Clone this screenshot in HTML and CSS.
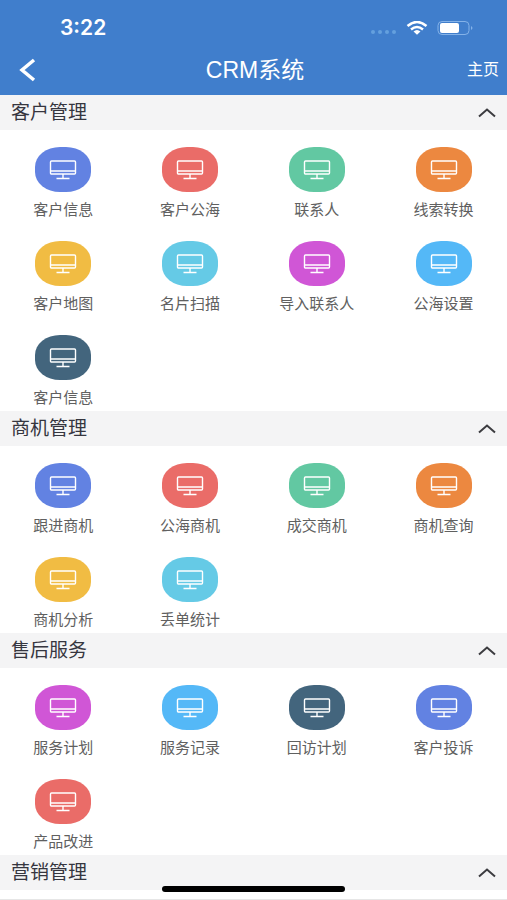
FILE: index.html
```html
<!DOCTYPE html>
<html lang="zh-CN">
<head>
<meta charset="utf-8">
<meta name="viewport" content="width=device-width, initial-scale=1">
<title>CRM系统</title>
<link rel="stylesheet" href="styles.css">
</head>
<body>
<svg class="defs" aria-hidden="true">
  <symbol id="monitor" viewBox="0 0 28 20">
    <rect x="1.500" y="1" width="25" height="13" rx="1"/>
    <path d="M1.500 11h25M14 14v4M7.500 18.500h13"/>
  </symbol>
  <symbol id="chevron" viewBox="0 0 18 10">
    <path d="M1 8.500l8-7 8 7"/>
  </symbol>
</svg>
<header class="top">
  <div class="status">
    <span class="time">3:22</span>
    <div class="signals">
      <span class="dots"><i></i><i></i><i></i><i></i></span>
      <svg class="wifi" viewBox="0 0 22 14" aria-hidden="true">
        <path d="M1.500 5Q11-3 20.500 5M5 8.500Q11 3.500 17 8.500"/>
        <path class="solid" d="M7.500 10.500Q11 7.500 14.500 10.500L11 13.800z"/>
      </svg>
      <svg class="battery" viewBox="0 0 36 14" aria-hidden="true">
        <rect class="shell" x="1" y="0.500" width="31" height="13" rx="4"/>
        <rect class="charge" x="3" y="2" width="19" height="10" rx="2"/>
        <path class="cap" d="M34 5q3 2 0 4z"/>
      </svg>
    </div>
  </div>
  <nav class="bar">
    <button class="back" type="button" aria-label="返回"><svg viewBox="0 0 18 24"><path d="M16 2L4 12l12 10"/></svg></button>
    <h1>CRM系统</h1>
    <a class="home" href="#">主页</a>
  </nav>
</header>
<main>
  <section>
    <h2><button class="head" type="button">客户管理<svg><use href="#chevron"/></svg></button></h2>
    <div class="grid">
      <a class="item" href="#"><span class="tile blue"><svg><use href="#monitor"/></svg></span>客户信息</a>
      <a class="item" href="#"><span class="tile red"><svg><use href="#monitor"/></svg></span>客户公海</a>
      <a class="item" href="#"><span class="tile green"><svg><use href="#monitor"/></svg></span>联系人</a>
      <a class="item" href="#"><span class="tile orange"><svg><use href="#monitor"/></svg></span>线索转换</a>
      <a class="item" href="#"><span class="tile yellow"><svg><use href="#monitor"/></svg></span>客户地图</a>
      <a class="item" href="#"><span class="tile cyan"><svg><use href="#monitor"/></svg></span>名片扫描</a>
      <a class="item" href="#"><span class="tile purple"><svg><use href="#monitor"/></svg></span>导入联系人</a>
      <a class="item" href="#"><span class="tile sky"><svg><use href="#monitor"/></svg></span>公海设置</a>
      <a class="item" href="#"><span class="tile slate"><svg><use href="#monitor"/></svg></span>客户信息</a>
    </div>
  </section>
  <section>
    <h2><button class="head" type="button">商机管理<svg><use href="#chevron"/></svg></button></h2>
    <div class="grid">
      <a class="item" href="#"><span class="tile blue"><svg><use href="#monitor"/></svg></span>跟进商机</a>
      <a class="item" href="#"><span class="tile red"><svg><use href="#monitor"/></svg></span>公海商机</a>
      <a class="item" href="#"><span class="tile green"><svg><use href="#monitor"/></svg></span>成交商机</a>
      <a class="item" href="#"><span class="tile orange"><svg><use href="#monitor"/></svg></span>商机查询</a>
      <a class="item" href="#"><span class="tile yellow"><svg><use href="#monitor"/></svg></span>商机分析</a>
      <a class="item" href="#"><span class="tile cyan"><svg><use href="#monitor"/></svg></span>丢单统计</a>
    </div>
  </section>
  <section>
    <h2><button class="head" type="button">售后服务<svg><use href="#chevron"/></svg></button></h2>
    <div class="grid">
      <a class="item" href="#"><span class="tile purple"><svg><use href="#monitor"/></svg></span>服务计划</a>
      <a class="item" href="#"><span class="tile sky"><svg><use href="#monitor"/></svg></span>服务记录</a>
      <a class="item" href="#"><span class="tile slate"><svg><use href="#monitor"/></svg></span>回访计划</a>
      <a class="item" href="#"><span class="tile blue"><svg><use href="#monitor"/></svg></span>客户投诉</a>
      <a class="item" href="#"><span class="tile red"><svg><use href="#monitor"/></svg></span>产品改进</a>
    </div>
  </section>
  <section class="last">
    <h2><button class="head" type="button">营销管理<svg><use href="#chevron"/></svg></button></h2>
  </section>
</main>
<div class="indicator"></div>
</body>
</html>
```
FILE: styles.css
```css
* { box-sizing: border-box; }
body {
  margin: 0;
  background: #fff;
  font-family: "Liberation Sans", "Noto Sans CJK SC", sans-serif;
}
h1, h2 { margin: 0; font-weight: 400; }
button { border: 0; background: none; padding: 0; font: inherit; }
a { text-decoration: none; }
svg { display: block; fill: none; }
.defs { position: absolute; width: 0; height: 0; }

.top { height: 95px; background: #407ecc; color: #fff; }
.status {
  display: flex;
  justify-content: space-between;
  align-items: center;
  height: 44px;
  padding: 12px 34px 0 60px;
}
.time { font: 600 21px/32px Inter, sans-serif; }
.signals { display: flex; align-items: center; }
.dots { display: flex; gap: 3px; margin: 8px 10px 0 0; }
.dots i { width: 4px; height: 4px; border-radius: 2px; background: #64a0de; }
.wifi { width: 22px; height: 14px; margin-right: 9px; stroke: #fff; stroke-width: 2.5; }
.wifi .solid { fill: #fff; stroke: none; }
.battery { width: 36px; height: 14px; }
.shell { stroke: #84b2e8; }
.charge { fill: #fff; }
.cap { fill: #84b2e8; }
.bar {
  display: grid;
  grid-template-columns: 1fr auto 1fr;
  align-items: center;
  height: 51px;
  padding: 0 8px 0 18px;
}
.back { width: 18px; height: 24px; }
.back svg { width: 18px; height: 24px; stroke: #fff; stroke-width: 3.5; }
.bar h1 { font-size: 23px; line-height: 32px; margin-right: 7px; }
.home { justify-self: end; color: #fff; font-size: 16px; line-height: 24px; }

.head {
  display: flex;
  justify-content: space-between;
  align-items: center;
  width: 100%;
  height: 35px;
  padding: 0 11px;
  background: #f4f4f5;
  color: #36363f;
  font-size: 19px;
  line-height: 28px;
}
.head svg { width: 18px; height: 10px; stroke: #3c3c40; stroke-width: 2; }
.grid {
  display: grid;
  grid-template-columns: repeat(4, 1fr);
  row-gap: 21px;
  padding: 17px 0 3px;
}
.item {
  display: flex;
  flex-direction: column;
  align-items: center;
  gap: 8px;
  color: #606060;
  font-size: 15px;
  line-height: 20px;
}
.tile {
  display: grid;
  place-items: center;
  width: 56px;
  height: 45px;
  border-radius: 25px / 20px;
}
.tile svg { width: 28px; height: 20px; stroke: #fff; stroke-width: 1.4; }
.blue { background: #6282e2; }
.red { background: #ea6c68; }
.green { background: #62c8a2; }
.orange { background: #ec8840; }
.yellow { background: #f1bc43; }
.cyan { background: #65cae6; }
.purple { background: #d056d6; }
.sky { background: #54b8f7; }
.slate { background: #43657d; }
.last { padding-bottom: 9px; border-bottom: 1px solid #e6e6e6; }
.indicator {
  position: fixed;
  bottom: 8px;
  left: 50%;
  width: 36%;
  height: 6px;
  margin-left: -18%;
  border-radius: 3px;
  background: #000;
}
```
